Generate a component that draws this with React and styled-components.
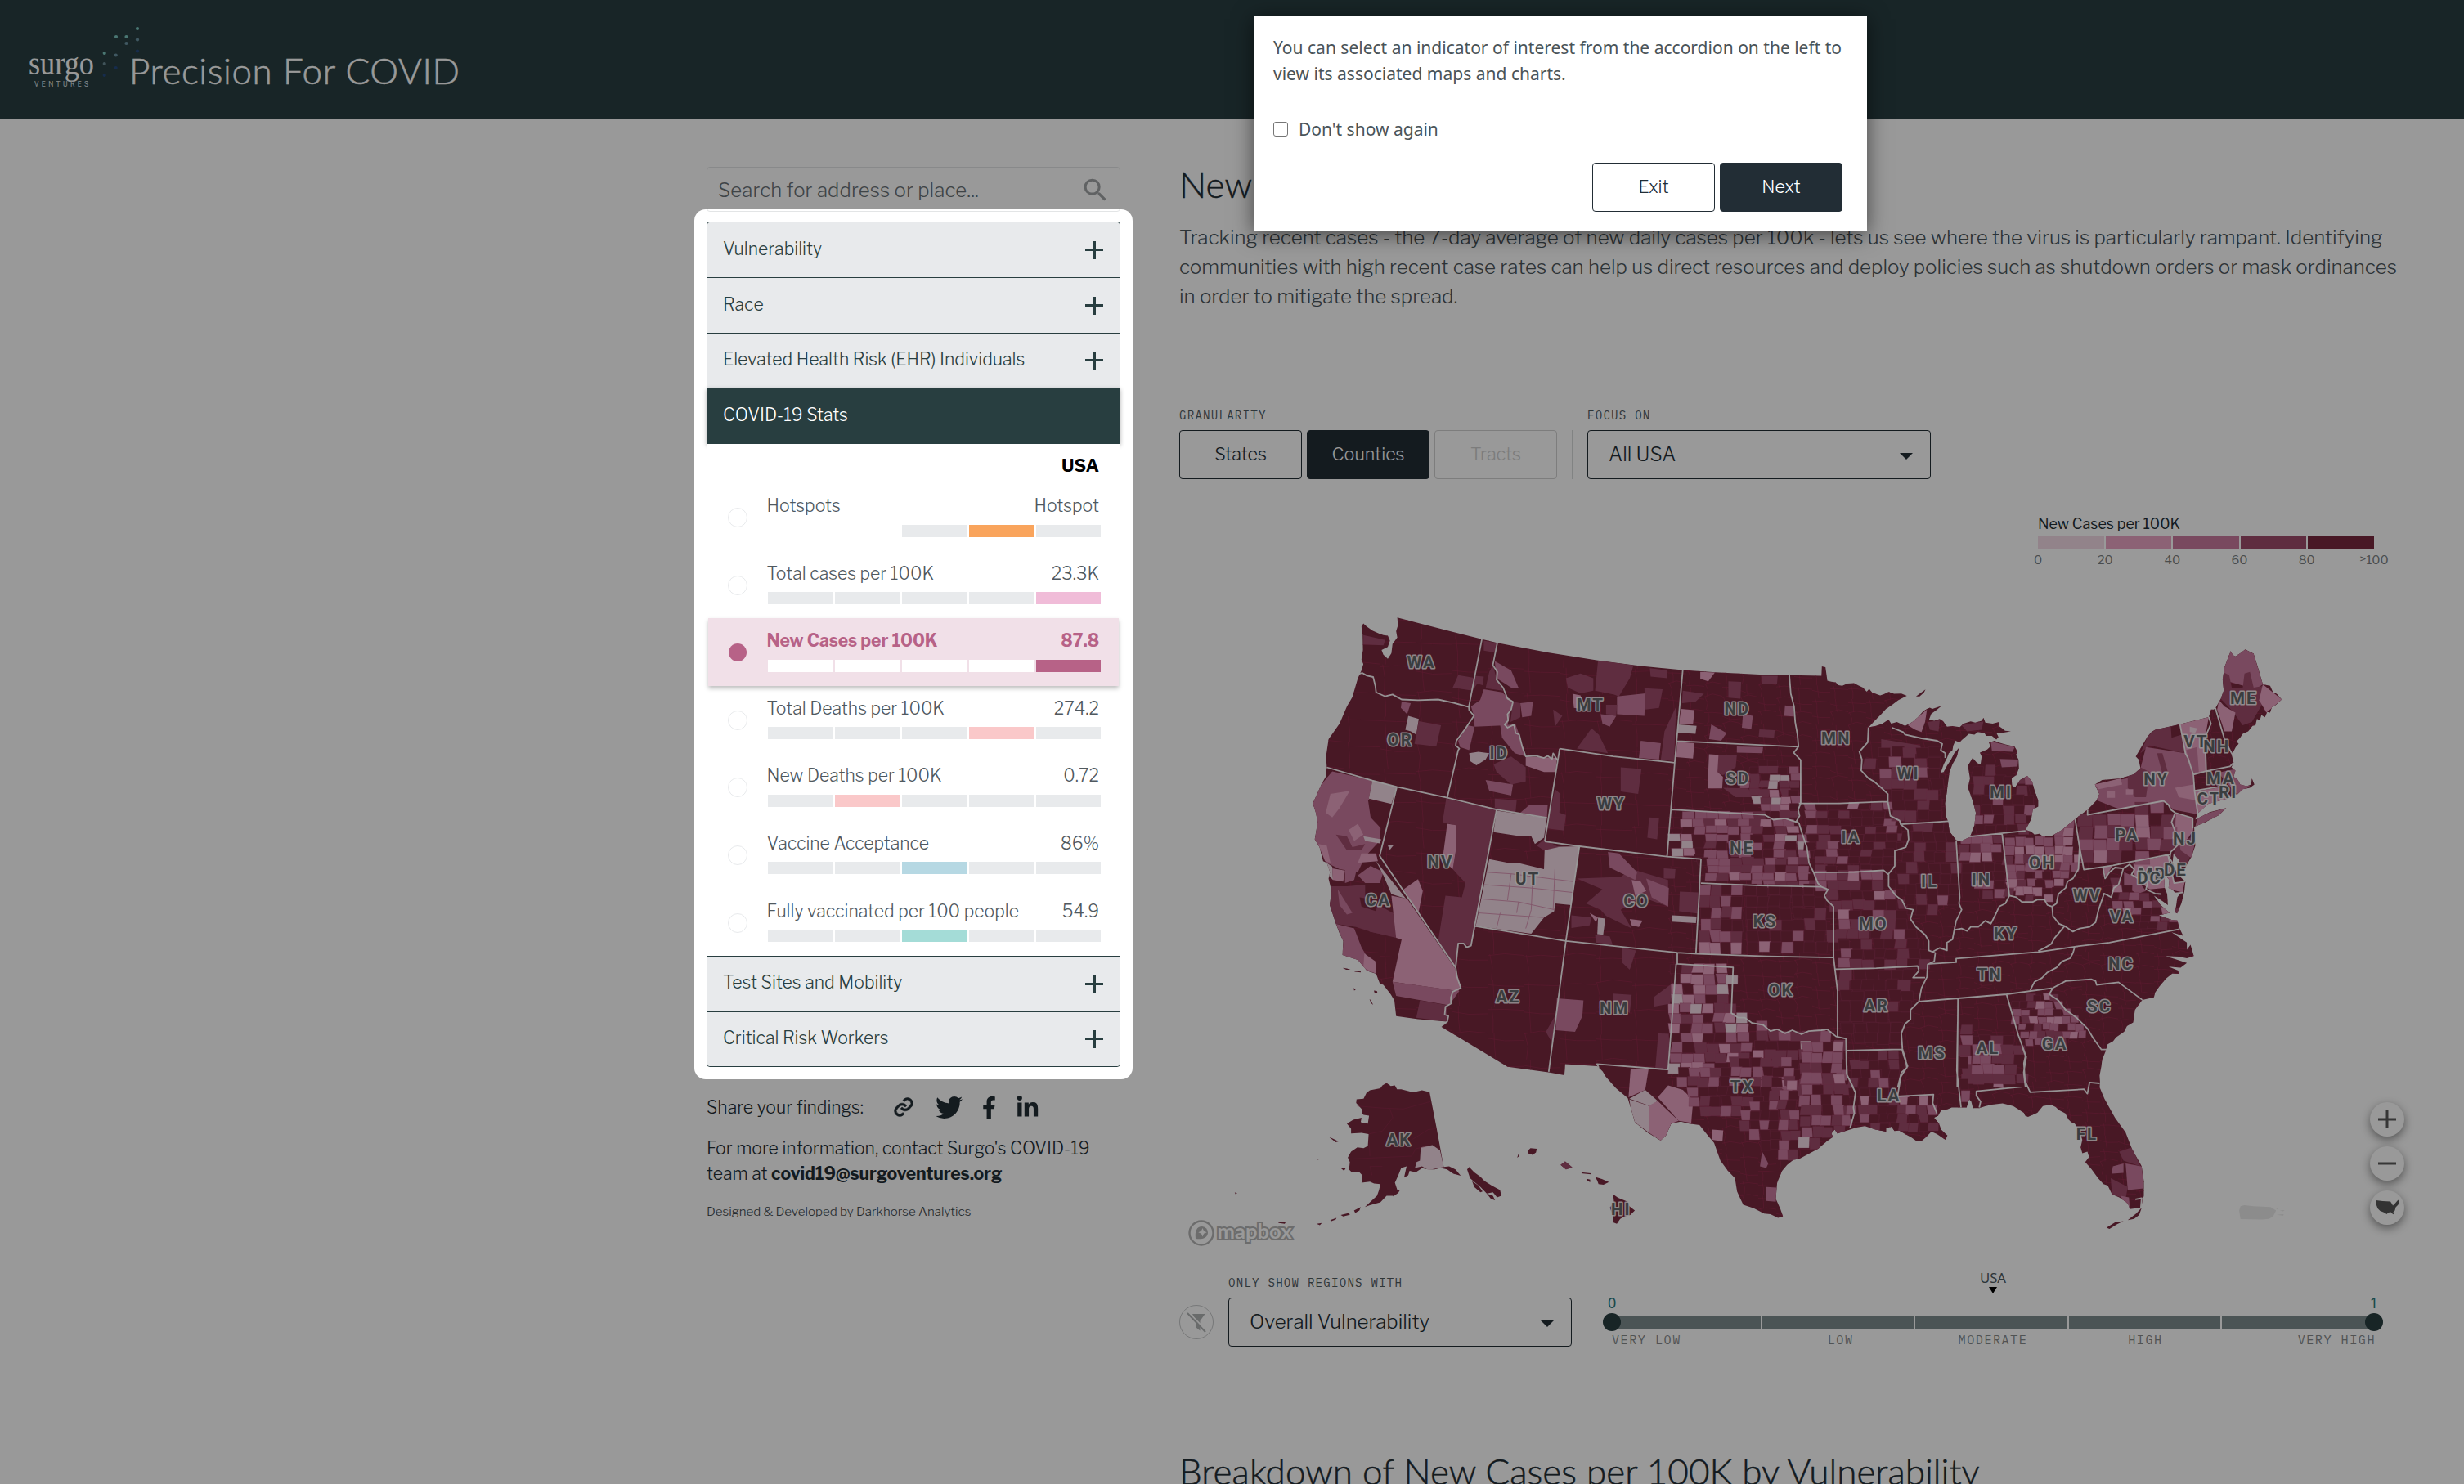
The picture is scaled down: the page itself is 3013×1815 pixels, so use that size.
import React from "react";
import styled, { createGlobalStyle, css } from "styled-components";
import { MdSearch } from "react-icons/md";
import { BiLink } from "react-icons/bi";
import { FaTwitter, FaFacebookF, FaLinkedinIn } from "react-icons/fa";

const sans = `"Libre Franklin", Inter, "Liberation Sans", sans-serif`;
const display = `Optima, Lato, sans-serif`;
const mono = `"IBM Plex Mono", "DejaVu Sans Mono", monospace`;
const ink = "#222d35";
const teal = "#283e40";

const Global = createGlobalStyle`
  * { box-sizing: border-box; }
  body { margin: 0; background: #fff; font-family: ${sans}; color: ${ink}; overflow: hidden; }
  button, input { font: inherit; }
`;

const Page = styled.div`
  position: relative;
  width: 3013px;
  height: 1815px;
  overflow: hidden;
`;

/* ---------- header ---------- */
const Header = styled.header`
  height: 145px;
  background: #283f41;
  display: flex;
  align-items: flex-start;
  padding: 25px 0 0 35px;
`;
const Brand = styled.div`
  width: 123px;
  height: 90px;
  svg { display: block; }
`;
const SiteTitle = styled.h1`
  margin: 33px 0 0;
  font: 300 44px/56px ${display};
  letter-spacing: 0.6px;
  -webkit-text-stroke: 0.5px #fff;
  color: #fff;
  white-space: nowrap;
`;

const brandDots = [
  [133, 10, "#7cc7c0"], [107, 20, "#7cc7c0"], [119.5, 20, "#7cc7c0"], [133, 23.5, "#6b93a3"],
  [119.5, 28, "#6b93a3"], [133, 37.5, "#264a80"], [92.7, 40, "#7cc7c0"], [106.7, 42.5, "#6b93a3"],
  [92.7, 53, "#6b8a94"], [106.7, 58, "#264a80"], [92.7, 67, "#264a80"],
];

/* ---------- columns ---------- */
const Columns = styled.div`
  display: flex;
  gap: 72px;
  padding-left: 864px;
`;
const Sidebar = styled.aside`
  width: 506px;
  padding-top: 59px;
`;
const Content = styled.main`
  width: 1520px;
  padding-top: 51px;
`;

const SearchBox = styled.div`
  height: 55px;
  border: 1px solid #e3e5e6;
  border-radius: 4px;
  padding: 2px 11px 0 13px;
  display: flex;
  align-items: center;
  justify-content: space-between;
  font-size: 24px;
  font-weight: 300;
  letter-spacing: 0.1px;
  color: #6a7277;
  svg { color: #a0a3a5; }
`;

const Stage = styled.section`
  position: relative;
  z-index: 5;
  margin: -3px -15px 0;
  padding: 15px;
  border-radius: 14px;
  box-shadow: 0 0 0 4000px rgba(0, 0, 0, 0.4);
`;
const Accordion = styled.div`
  border: 1px solid ${teal};
  border-radius: 4px;
  height: 1034px;
`;
const AccordionHeader = styled.div`
  height: ${(p) => (p.$open ? 69 : 67.4)}px;
  display: flex;
  align-items: center;
  justify-content: space-between;
  padding: 0 18px 3px 19px;
  font-size: 21.2px;
  font-weight: 300;
  color: ${teal};
  background: #e8eaec;
  border-top: ${(p) => (p.$line ? `1px solid ${teal}` : "none")};
  border-radius: ${(p) => (p.$edge === "top" ? "4px 4px 0 0" : p.$edge === "bottom" ? "0 0 4px 4px" : 0)};
  ${(p) =>
    p.$open &&
    css`
      color: #fff;
      background: ${teal};
      margin: 0 -1px;
      padding-left: 20px;
      box-shadow: 0 2px 5px rgba(0, 0, 0, 0.3);
    `}
`;
const Plus = styled.span`
  width: 22px;
  height: 22px;
  margin-right: 2px;
  margin-top: 3px;
  background:
    linear-gradient(${teal}, ${teal}) center / 22px 3px no-repeat,
    linear-gradient(${teal}, ${teal}) center / 3px 22px no-repeat;
`;
const Panel = styled.div`
  height: 626px;
  background: #fff;
  display: flex;
  flex-direction: column;
`;
const PanelHead = styled.div`
  height: 48px;
  padding: 12px 25px 0 0;
  text-align: right;
  font: 700 21.5px/28px ${sans};
  color: #000;
`;
const IndicatorRow = styled.div`
  height: 82.57px;
  margin: 0 1px;
  padding: 14px 22px 0 24px;
  display: grid;
  grid-template-columns: 49px 407px;
  color: ${(p) => (p.$active ? "#b76287" : "#50595f")};
  font-weight: ${(p) => (p.$active ? 700 : 300)};
  letter-spacing: ${(p) => (p.$active ? "-0.15px" : "0")};
  background: ${(p) => (p.$active ? "#f1e0e8" : "transparent")};
  box-shadow: ${(p) => (p.$active ? "0 3px 5px rgba(0,0,0,.25)" : "none")};
`;
const Radio = styled.span`
  width: ${(p) => (p.$active ? 22 : 24)}px;
  height: ${(p) => (p.$active ? 22 : 24)}px;
  margin: ${(p) => (p.$active ? "17px 0 0 1px" : "16px 0 0 0")};
  border-radius: 50%;
  border: ${(p) => (p.$active ? "none" : "1px solid #e8eaec")};
  background: ${(p) => (p.$active ? "#b76287" : "#fff")};
`;
const RowText = styled.div`
  display: flex;
  justify-content: space-between;
  margin-left: -1.5px;
  padding-right: 2px;
  font-size: 21.2px;
  line-height: 28px;
  white-space: nowrap;
`;
const Segments = styled.div`
  display: grid;
  grid-template-columns: repeat(5, 79px);
  gap: 3px;
  margin-top: 8.5px;
`;
const Segment = styled.span`
  height: 15px;
  background: ${(p) => p.$color};
`;

const ShareRow = styled.div`
  display: flex;
  align-items: center;
  height: 40px;
  margin-top: 14px;
  font-size: 21.2px;
  font-weight: 300;
  svg { display: block; color: ${ink}; }
`;
const ShareText = styled.span`
  width: 225px;
`;
const ShareIcons = styled.div`
  display: flex;
  align-items: center;
  gap: 19px;
  svg:first-child { margin-right: 4px; stroke: ${ink}; stroke-width: 0.5px; }
`;
const Contact = styled.p`
  margin: 15px 0 0;
  font-size: 21.2px;
  font-weight: 300;
  line-height: 31px;
  white-space: nowrap;
  b { font-weight: 700; letter-spacing: -0.1px; }
`;
const Credit = styled.p`
  margin: 21px 0 0;
  font-size: 15.15px;
  line-height: 20px;
  font-weight: 300;
  color: #40484d;
`;

/* ---------- content ---------- */
const Heading = styled.h2`
  margin: ${(p) => p.$top || 0}px 0 0;
  font: 300 44px/58px ${display};
  letter-spacing: 0.02px;
  -webkit-text-stroke: 0.5px ${ink};
  color: ${ink};
  white-space: nowrap;
`;
const Intro = styled.p`
  margin: 19px 0 0;
  height: 108px;
  font-size: 24.18px;
  line-height: 36px;
  font-weight: 300;
  color: #4b555b;
  white-space: nowrap;
`;
const Controls = styled.div`
  display: flex;
  margin-top: 117px;
`;
const Field = styled.div`
  display: flex;
  flex-direction: column;
`;
const Label = styled.span`
  height: 28px;
  font: 400 14.2px/19px ${mono};
  letter-spacing: 1.18px;
  color: #4f5a60;
  white-space: nowrap;
`;
const ButtonRow = styled.div`
  display: flex;
  gap: 6px;
`;
const Button = styled.button`
  width: 150px;
  height: 60px;
  padding: 0 0 3px;
  border-radius: 4px;
  font-size: 21.5px;
  font-weight: 300;
  font-family: ${sans};
  color: ${ink};
  background: #fff;
  border: 1.5px solid ${ink};
  ${(p) => p.$solid && css`background: ${ink}; color: #fff;`}
  ${(p) => p.$muted && css`border-color: #d0d0d0; color: #cfcfcf;`}
`;
const Divider = styled.span`
  width: 1px;
  height: 60px;
  margin: 28px 18px 0 18px;
  background: #d8dadb;
`;
const Select = styled.div`
  width: 420px;
  height: 60px;
  border: 1.5px solid ${ink};
  border-radius: 4px;
  padding: 0 21px 1px 25px;
  display: flex;
  align-items: center;
  justify-content: space-between;
  font-size: 24px;
  font-weight: 300;
`;
const Caret = styled.i`
  border: 8px solid transparent;
  border-top-color: ${ink};
  border-bottom: 0;
  margin-top: 4px;
`;

const Legend = styled.div`
  width: 411px;
  height: 78px;
  margin: 42px 0 0 1050px;
`;
const LegendTitle = styled.div`
  font-size: 17.9px;
  line-height: 26px;
  font-weight: 400;
`;
const LegendBar = styled.div`
  display: grid;
  grid-template-columns: repeat(5, 1fr);
  gap: 2px;
  margin-top: 2px;
`;
const LegendSwatch = styled.i`
  height: 16px;
  background: ${(p) => p.$color};
`;
const LegendTicks = styled.div`
  display: flex;
  justify-content: space-between;
  margin: 3px -30px 0;
  font-size: 14.8px;
  line-height: 20px;
  color: #7b7f82;
  span { width: 60px; text-align: center; }
`;

const MapFrame = styled.div`
  position: relative;
  height: 816px;
  svg.map { display: block; }
`;
const MapAttribution = styled.div`
  position: absolute;
  left: 9.5px;
  bottom: -3px;
  display: flex;
  align-items: center;
`;
const MapButtons = styled.div`
  position: absolute;
  left: 1456px;
  top: 642px;
  display: flex;
  flex-direction: column;
  gap: 12px;
`;
const RoundButton = styled.button`
  width: 42px;
  height: 42px;
  padding: 0;
  border: 0;
  border-radius: 50%;
  background: #fff;
  box-shadow: 0 4px 12px rgba(0, 0, 0, 0.45);
  display: grid;
  place-items: center;
`;

const FilterRow = styled.div`
  display: flex;
  align-items: flex-start;
  margin-top: 37px;
  height: 96px;
`;
const FilterToggle = styled.span`
  width: 42px;
  height: 42px;
  margin: 37px 18px 0 0;
  border-radius: 50%;
  border: 1px solid #c6c8c9;
  display: grid;
  place-items: center;
`;
const Slider = styled.div`
  width: 932px;
  margin: -6px 0 0 49px;
  font-family: ${mono};
`;
const SliderMarker = styled.div`
  display: flex;
  flex-direction: column;
  align-items: center;
  height: 30px;
  font: 400 16.8px/20px "Noto Sans", sans-serif;
  color: #4f5a60;
  i { margin-top: 1px; border: 5.5px solid transparent; border-top: 8px solid #000; border-bottom: 0; }
`;
const SliderEnds = styled.div`
  display: flex;
  justify-content: space-between;
  margin: 0 -5px;
  font: 400 18px/20px "Noto Sans", sans-serif;
  color: #2d7a7a;
`;
const SliderTrack = styled.div`
  display: grid;
  grid-template-columns: 22px 1fr 22px;
  align-items: center;
  margin: 3px -11px 0;
  height: 22px;
`;
const TrackBars = styled.div`
  grid-column: 1 / 4;
  grid-row: 1;
  margin: 0 12px 0 8px;
  display: grid;
  grid-template-columns: repeat(5, 1fr);
  gap: 2px;
  i { height: 15px; background: #7d8c8e; }
`;
const Knob = styled.span`
  grid-row: 1;
  grid-column: ${(p) => p.$col};
  z-index: 1;
  width: 22px;
  height: 22px;
  border-radius: 50%;
  background: ${teal};
`;
const SliderLabels = styled.div`
  display: grid;
  grid-template-columns: repeat(5, 1fr);
  font-size: 15.2px;
  line-height: 20px;
  letter-spacing: 1.48px;
  color: #858a8d;
  text-align: center;
  span:first-child { text-align: left; }
  span:last-child { text-align: right; margin-right: -2px; }
`;

/* ---------- popover ---------- */
const Popover = styled.div`
  position: absolute;
  z-index: 10;
  left: 1533px;
  top: 19px;
  width: 750px;
  height: 264px;
  padding: 23px 30px 0 24px;
  background: #fff;
  box-shadow: 0 4px 24px rgba(0, 0, 0, 0.55);
  font-family: "Noto Sans", sans-serif;
  color: #4a5459;
`;
const PopoverText = styled.p`
  margin: 0;
  font-size: 21.03px;
  line-height: 32px;
  white-space: nowrap;
`;
const CheckLine = styled.label`
  display: flex;
  align-items: center;
  gap: 13px;
  margin-top: 36px;
  height: 32px;
  font-size: 21.03px;
`;
const CheckBox = styled.span`
  width: 18px;
  height: 18px;
  border: 1.5px solid #767676;
  border-radius: 3px;
`;
const PopoverButtons = styled.div`
  display: flex;
  justify-content: flex-end;
  gap: 6px;
  margin-top: 25px;
`;

/* ---------- map geometry ---------- */
// Survey sheets: each has an origin and a scale, so neighbouring sheets join in one canvas.
const sheet = (ox, oy, sx, sy) => (str) =>
  str.trim().split(/\s+/).map((p) => {
    const [x, y] = p.split(",").map(Number);
    return [ox + x / sx, oy + y / sy];
  });
const W = sheet(1580, 730, 2.24, 2.6133);
const E = sheet(2200, 730, 2.24, 2.6133);
const S = sheet(1420, 1250, 1.96, 2.775);
const T = sheet(2200, 1250, 1.929, 2.775);
const line = (pts) => "M" + pts.map((p) => p[0].toFixed(1) + "," + p[1].toFixed(1)).join("L");
const area = (pts) => line(pts) + "Z";

const usa = [
  ...W("195,85 205,95 220,108 240,118 250,122 262,124 268,140 262,160 245,170 250,185 262,198 272,180 275,150 288,130 285,110 290,90 288,66 400,100 520,135 562,147 700,178 838,203 950,220 1070,234 1160,241 1280,248 1362,250 1450,252 1451,222 1461,225 1466,268"),
  ...E("77,268 88,271 100,273 108,282 118,284 132,277 150,276 162,283 175,290 185,303 192,294 200,306 222,315 232,311 245,304 260,310 280,309 295,316 272,330 255,345 238,358 225,375 208,395 190,417 208,413 228,405 245,392 252,405 268,400 290,412 310,400 325,385 340,365 350,358 358,354 365,358 390,348 378,360 362,374 356,392 370,396 385,390 395,398 405,415 420,413 440,416 450,405 470,398 482,402 500,396 505,386 510,402 530,405 548,400 546,412 556,420 564,428 580,430 560,434 540,434 546,448 540,456 528,444 512,444 508,436 490,432 480,440 465,438 455,448 445,458 440,465 428,460 422,476 420,490 410,500 405,515 396,535 388,562 396,560 405,540 415,522 425,500 438,482 432,510 420,535 412,560 405,620 400,660 402,700 408,717 412,750 430,778 445,780 468,767 480,730 484,690 475,650 462,610 468,580 462,540 475,515 488,532 497,535 500,510 495,498 515,488 524,478 520,466 535,460 548,466 565,472 590,478 598,495 594,505 601,520 602,548 595,570 582,580 583,605 592,608 605,585 625,572 638,590 645,620 655,650 655,670 640,680 636,710 620,745 635,750 645,760 658,757 668,766 690,765 705,755 720,745 756,710 790,680 815,650 822,630 810,600 830,585 880,580 915,568 935,548 930,520 922,510 935,485 955,445 965,432 975,425 1043,407 1122,384 1128,360 1136,360 1141,354 1155,325 1163,300 1160,265 1165,225 1182,173 1188,186 1195,190 1208,180 1222,168 1245,182 1258,230 1270,280 1290,284 1298,305 1308,310 1322,328 1305,346 1295,352 1290,370 1282,368 1276,385 1266,378 1262,395 1254,390 1250,410 1242,412 1230,430 1215,438 1208,450 1198,462 1204,470 1196,480 1185,505 1190,530 1184,545 1195,555 1190,575 1202,585 1208,600 1226,605 1238,600 1240,580 1247,600 1235,610 1215,615 1200,632 1190,630 1182,640 1178,630 1174,645 1150,652 1120,662 1092,692 1085,712 1125,688 1170,675 1150,698 1110,722 1082,735 1085,795 1075,830 1060,860 1052,880 1040,840 1025,820 1023,850 1035,885 1058,910 1055,942 1047,980 1035,1012 1030,1008 1036,960 1045,946 1030,946 1022,935 1012,930 1014,905 1002,888 1000,925 1008,950 1010,985 990,968 972,955 990,985 1015,1010 985,1018 1020,1032 1036,1034 1042,1060 1052,1083 1020,1072 1040,1088 1062,1105 1062,1128 1072,1112 1081,1148 1062,1155 1040,1150 1003,1148 1040,1162 1062,1170 1045,1185 1012,1182 1038,1194 1040,1205 1022,1204 1005,1220 985,1248 975,1265 972,1280 940,1288 920,1320 915,1360 898,1372 890,1390 868,1408 860,1420 845,1430 840,1450 830,1480 828,1500 823,1530 824,1550"),
  ...T("709,222 720,260 745,325 770,375 785,430 808,490 813,540 813,590 806,630 780,635 776,618 770,610 755,595 738,585 728,555 718,550 705,530 690,500 675,475 684,458 680,440 668,445 664,425 668,400 660,365 650,345 642,340 635,330 628,310 612,298 605,288 593,280 575,285 562,308 540,322 533,318 530,308 505,285 480,276 455,280 440,285 425,292 410,292 406,270 401,262 395,290 360,290 350,296 335,300 328,318 318,325 330,345 335,365 350,385 345,400 325,380 312,372 300,390 290,402 278,405 265,392 250,380 235,368 225,370 218,355 205,360 205,372 180,365 155,353 135,358 120,365 105,372 90,378 84,365 76,378 80,390 65,405 45,430 0,465"),
  ...S("1515,468 1500,485 1488,505 1476,545 1473,600 1484,635 1490,660 1478,665 1460,652 1445,650 1420,632 1395,620 1388,600 1380,575 1375,530 1358,505 1340,470 1325,410 1310,385 1290,350 1265,345 1245,338 1222,345 1210,385 1197,402 1165,375 1135,340 1125,290 1118,258 1090,225 1065,185 1058,168 1045,150 968,143 966,180 928,171 830,152 670,15"),
  ...W("407,1373 425,1358 345,1350 285,1340 280,1290 270,1270 250,1240 240,1235 230,1205 205,1195 180,1160 138,1145 140,1100 130,1075 120,1045 103,985 108,940 100,900 104,880 95,850 85,845 75,800 62,775 70,720 65,690 57,660 80,600 92,575 95,545 93,510 100,455 130,405 150,350 165,320 180,260 190,235 195,215 190,200 194,170 193,120 190,95"),
];

const alaska = [
  S("540,207 550,217 560,215 565,228 575,228 600,237 612,236 625,232 643,238 660,360 677,492 690,490 705,500 718,522 700,515 685,500 670,495 655,500 640,500 625,496 610,510 595,505 592,520 582,528 588,490 575,495 568,520 560,545 566,572 556,590 540,590 525,612 500,622 488,628 500,612 517,590 522,570 525,550 510,548 500,542 480,545 482,520 475,510 455,508 450,500 452,475 447,460 455,440 470,425 485,428 495,420 497,380 480,376 455,378 455,362 445,345 460,332 480,325 478,340 495,345 498,318 485,315 482,310 480,295 467,275 468,262 485,260 492,240 500,232 525,225 530,215"),
  S("733,500 738,492 750,510 765,525 775,540 792,555 812,570 815,590 805,595 795,578 780,582 765,560 748,540 740,530"),
  S("745,540 760,555 770,575 765,578 750,560"), S("780,582 795,590 800,605 790,600"),
  S("462,640 478,628 475,640 465,648"), S("430,655 450,648 452,654 436,660"), S("405,672 420,665 418,670 408,676"),
  S("372,685 385,682 380,690"), S("278,678 298,680 296,685 282,682"), S("402,390 412,396 425,405 418,408"),
  S("430,495 442,496 438,505"), S("372,462 378,466 374,468"), S("176,578 182,582 178,584"),
  S("550,575 572,570 568,580 556,592"),
];
const hawaii = [
  S("878,437 885,428 900,430 898,443 890,451 880,446"), S("957,485 968,473 985,493 970,500"),
  S("1006,510 1030,513 1030,517 1010,514"), S("1040,526 1056,533 1073,543 1060,552 1048,550 1045,538"),
  S("1020,532 1028,535 1028,543 1022,540"), S("1083,585 1095,597 1118,610 1122,625 1135,640 1124,655 1110,660 1100,668 1092,685 1083,680 1082,655 1075,630 1085,612"),
  S("856,448 858,455 853,461"),
];
const coastBits = [
  W("138,1186 150,1188 160,1192 148,1192"), W("168,1195 188,1194 188,1200 172,1198"), W("168,1250 174,1256 170,1258"),
  W("224,1258 232,1260 234,1266 226,1266"), W("212,1285 216,1290 222,1304 216,1298"),
  E("320,318 335,305 346,296 342,306 330,318"), T("725,698 745,680 765,676 750,686 732,702"), T("775,672 795,650 808,630 802,655 790,668"),
];

const tone = { 1: "#f4dae6", 2: "#e9a4c4", 3: "#ca7b9e", 4: "#9f4c6c", 5: "#78283f" };

const patches = [
  [3, W("110,558 220,587 210,645 245,700 240,780 200,830 180,880 130,870 95,850 62,775 70,720 57,660 80,600")],
  [5, W("208,650 272,662 250,748 215,705")],
  [4, W("120,760 150,765 165,800 200,790 190,810 150,810")],
  [2, W("105,630 158,620 130,675 110,705 92,690")], [2, W("72,790 95,795 105,850 90,845")],
  [2, W("155,745 180,725 195,760 170,780")], [1, W("195,765 244,775 240,788 200,780")],
  [2, W("190,820 230,820 235,845 180,850")], [1, W("95,850 110,862 112,905 100,890")],
  [2, W("110,868 145,875 140,910 112,905")], [3, W("145,860 178,865 170,905 145,915")],
  [4, W("108,925 150,925 200,920 200,960 275,1010 285,1090 215,1070 175,1055 120,1045 103,985")],
  [3, W("180,890 215,860 250,880 240,915 200,915")], [3, W("125,935 165,1010 150,1015 130,985")],
  [4, W("218,1010 280,1010 287,1088 212,1070")], [5, W("185,960 235,970 230,1005 190,990")],
  [3, W("120,1045 170,1060 190,1120 230,1200 205,1200 138,1145 140,1100")],
  [2, W("198,1140 228,1165 230,1205 195,1185")],
  [1, W("230,845 312,965 272,950 250,890")],
  [2, W("272,955 315,965 445,1185 462,1250 455,1260 275,1230 300,1095 285,1090")],
  [3, W("275,1230 458,1260 430,1305 285,1275")], [4, W("350,1290 425,1305 425,1358 340,1345")],
  [4, W("422,645 558,680 545,760 505,1045 490,1115 455,1108 448,1185 400,1100 420,955 465,960 475,915 440,870 450,800 445,730 412,720")],
  [2, W("425,725 448,730 450,800 440,870 412,840")], [2, W("345,902 358,940 346,1010 305,935")],
  [1, W("262,795 279,792 268,808")], [1, W("220,587 287,607 272,662 210,645")],
  [1, W("540,838 600,852 625,852 690,870 692,800 787,797 765,985 720,980 718,1005 690,1025 655,1077 503,1052")],
  [1, W("560,683 698,706 690,770 665,790 655,765 625,765 552,752")],
  [4, W("690,775 730,800 690,810 670,795")],
  [1, W("318,380 347,390 340,440 325,430 310,425")], [4, W("347,397 408,410 395,478 335,470")],
  [3, W("300,335 325,340 315,375 298,355")], [4, W("195,122 255,138 250,155 195,152")],
  [4, W("455,250 515,262 495,300 440,290")], [4, W("525,140 560,148 555,178 525,172")],
  [4, W("498,252 525,255 522,282 500,275")], [4, W("550,218 560,262 578,300 530,292 540,240")],
  [3, W("525,295 575,305 605,335 590,410 500,415 498,380 490,350 515,330")],
  [3, W("455,460 480,410 500,415 485,490 460,480")], [3, W("570,410 612,408 622,440 640,510 610,500 575,450")],
  [1, W("485,500 510,495 540,500 530,520 505,538 488,525")],
  [2, W("640,510 725,515 722,560 690,560 640,540")], [4, W("552,535 600,510 640,545 640,590 600,600 560,560")],
  [3, W("530,585 605,600 600,635 540,620")], [4, W("555,645 615,650 612,690 555,675")],
  [3, W("650,665 700,665 698,706 625,690")],
  [4, W("838,203 935,218 925,260 895,318 882,312 830,300")], [4, W("750,260 790,245 825,260 825,300 790,308 755,290")],
  [3, W("555,205 600,235 620,290 600,290 560,260")], [3, W("625,340 660,335 655,380 630,385")],
  [4, W("605,335 625,340 625,385 598,400")], [4, W("715,360 740,380 720,415")],
  [4, W("820,420 840,440 865,500 780,485")], [4, W("980,228 1028,235 1028,260 982,255")],
  [4, W("965,292 1015,295 1005,355 968,360")], [3, W("890,318 968,308 965,380 890,375")],
  [4, W("860,345 890,345 888,378 860,375")], [3, W("845,375 888,380 870,415 850,405")],
  [2, W("768,310 790,315 800,360 772,355")], [3, W("955,460 1010,468 1005,520 950,515")],
  [4, W("1052,350 1046,525 1010,520 1020,430")],
  [4, W("900,545 957,550 948,630 900,622")], [4, W("720,615 735,630 732,690 750,697 745,747 698,740")],
  [4, W("978,705 1005,707 1000,775 973,770")],
  [4, W("780,900 900,895 930,870 1030,905 1030,990 960,960 900,1000 930,1060 860,1020 845,1000 805,980 850,935")],
  [3, W("865,815 895,820 945,880 940,905 870,865")], [3, W("970,900 1032,930 1030,990 985,960")],
  [2, W("930,905 955,910 970,940 940,955")], [4, W("765,1018 820,1025 815,1050 765,1058")],
  [1, W("838,1025 858,1028 852,1080 836,1078")], [2, W("815,1010 838,1025 832,1040")],
  [2, W("925,1030 960,1035 950,1055 930,1050")], [1, W("1040,1018 1108,1022 1106,1043 1040,1038")],
  [4, W("1062,942 1112,945 1110,1012 1060,1005")], [4, W("830,1080 870,1085 878,1112 832,1105")],
  [4, W("1018,868 1050,870 1048,900 1018,900")],
  [4, W("905,1120 942,1130 925,1192 905,1170")], [4, W("1045,1232 1035,1300 990,1310 990,1280")],
  [4, W("1003,1395 1037,1397 1030,1511 995,1505")], [4, W("880,1268 930,1272 925,1330 880,1300")],
  [3, W("725,1283 798,1290 795,1340 775,1390 722,1385")], [4, W("720,1340 712,1425 695,1390")],
  [4, W("1070,300 1128,310 1105,335 1068,340")], [2, W("1118,240 1158,242 1140,270 1118,262")],
  [2, W("1065,358 1102,362 1098,408 1060,405")], [1, W("1058,408 1108,412 1105,438 1056,434")],
  [3, W("1148,408 1190,435 1175,460 1142,455")], [4, W("1195,270 1230,272 1228,325 1195,322")],
  [3, W("1235,375 1262,380 1258,422 1232,418")], [3, W("1350,347 1373,350 1375,382 1348,380")],
  [4, W("1285,252 1330,252 1328,280 1286,278")], [4, W("1280,423 1322,426 1320,450 1278,447")],
  [2, W("1056,463 1102,468 1098,517 1052,512")], [4, W("1165,505 1218,506 1215,545 1180,570 1160,560")],
  [2, W("1142,503 1168,505 1165,560 1180,575 1178,612 1138,612")], [4, W("1180,610 1250,612 1260,640 1215,640")],
  [3, W("1218,478 1290,480 1288,500 1218,498")],
  [3, E("1182,173 1195,190 1222,168 1245,182 1270,280 1250,295 1235,290 1160,265 1165,225")],
  [4, E("1160,240 1178,250 1185,290 1215,292 1220,245 1235,240 1245,290 1270,285 1270,340 1240,400 1215,410 1190,370 1155,325")],
  [2, E("1270,280 1322,328 1280,370 1260,330")], [2, E("1150,330 1165,350 1195,370 1185,430 1165,430 1145,360")],
  [4, E("975,425 1043,407 1058,500 960,475 935,500 955,445")], [5, E("1018,415 1043,407 1048,440 1020,450")],
  [3, E("950,480 1058,500 1080,568 1092,695 1025,680 998,652 880,680 815,650 822,630 810,600 920,575 935,548")],
  [4, E("900,570 935,545 960,560 950,640 920,640 900,610")], [4, E("980,500 995,500 1010,560 995,565")],
  [2, E("810,600 880,580 885,600 820,615")], [2, E("1030,610 1080,600 1085,650 1040,640")],
  [2, E("843,620 865,620 865,642 843,642")], [2, E("895,615 915,615 915,632 895,632")],
  [2, E("1043,407 1122,384 1112,450 1115,556 1085,565 1058,500")], [3, E("1060,490 1090,480 1095,560 1080,562")],
  [1, E("1070,415 1090,420 1085,435 1070,432")],
  [3, E("1148,562 1195,550 1212,600 1235,605 1200,632 1175,600")], [2, E("1083,622 1165,607 1172,645 1092,692")],
  [3, E("1092,700 1170,675 1150,698 1085,735")], [2, E("1030,692 1078,707 1080,745 1055,790 1037,790 1020,720")],
  [4, E("1037,790 1080,765 1082,800 1060,860 1022,830")], [3, E("1040,780 1083,790 1075,835 1045,810")],
  [2, E("915,850 1010,825 1027,915 1056,912 1050,945 1000,930 960,935 920,900")],
  [2, E("832,864 858,860 840,895")], [3, E("890,880 920,895 950,940 925,950 890,920")],
  [2, E("298,410 325,385 350,360 345,400 335,432 318,425")], [4, E("352,400 385,395 382,430 358,425")],
  [4, E("445,410 505,398 500,425 460,430")], [3, E("525,462 590,480 585,495 528,492")],
  [3, E("550,518 600,520 598,542 555,545")], [4, E("225,455 332,475 335,500 250,510 225,500")],
  [2, T("460,188 480,190 482,225 458,220")],
  [3, T("770,480 808,490 813,565 775,570")], [4, T("755,440 785,425 805,490 765,470")],
  [4, T("735,530 775,560 770,600 738,585")], [3, T("758,590 778,595 780,635 770,625")],
  [3, T("740,490 765,480 765,512 737,515")],
  [2, S("1125,158 1168,160 1160,230 1120,255")], [1, S("1122,260 1160,230 1190,268 1172,285")],
  [1, S("1122,262 1170,285 1168,375 1135,340 1125,290")],
  [2, S("1170,283 1190,268 1240,335 1222,345 1210,385 1197,402 1168,375")],
  [2, S("1190,255 1215,215 1250,230 1275,265 1270,342 1240,335")],
  [2, S("1320,365 1347,368 1345,405 1320,400")], [3, S("1450,560 1475,562 1473,610 1450,607")],
  [3, S("1440,440 1455,480 1450,495 1435,490")],
];

// Counties laid out as rough grids: [boundary, cell width, cell height, share of each tone 1..4]
const fields = [
  [W("1038,755 1120,760 1120,838 1030,828"), 14, 9, [0.25, 0.3, 0.2, 0]],
  [W("1062,684 1295,697 1315,712 1388,720 1410,800 1428,880 1450,927 1120,915 1120,760 1062,755"), 14, 9.5, [0.05, 0.13, 0.42, 0.24]],
  [W("1290,520 1393,550 1388,715 1310,700 1220,600"), 12, 9, [0.05, 0.13, 0.26, 0.34]],
  [W("1112,920 1220,920 1240,1145 1112,1140"), 13, 14, [0, 0.18, 0.26, 0.22]],
  [W("1240,920 1475,930 1483,1150 1240,1145"), 14, 14, [0, 0.01, 0.04, 0.08]],
  [W("1052,1175 1208,1186 1205,1330 1260,1350 1260,1500 1030,1511"), 14, 12, [0.1, 0.24, 0.25, 0.24]],
  [W("1260,1355 1350,1392 1450,1385 1517,1412 1520,1568 1260,1568"), 14, 12, [0.01, 0.07, 0.2, 0.38]],
  [S("1230,150 1520,120 1530,270 1410,290 1370,340 1270,290 1240,220"), 13, 12, [0, 0.1, 0.26, 0.3]],
  [S("1400,280 1529,200 1529,455 1490,470 1380,350"), 12, 12, [0, 0.04, 0.24, 0.26]],
  [T("0,60 60,30 111,98 113,180 133,240 120,360 60,405 0,460"), 13, 13, [0.01, 0.08, 0.42, 0.3]],
  [E("10,662 240,658 275,720 297,795 262,812 245,880 38,880"), 14, 9.5, [0, 0.03, 0.08, 0.2]],
  [E("40,885 230,875 285,970 310,1045 350,1130 345,1175 98,1188 92,985"), 14, 12, [0, 0.03, 0.18, 0.38]],
  [E("278,730 410,720 430,778 430,850 300,850"), 13, 12, [0, 0.04, 0.14, 0.2]],
  [E("262,850 435,850 440,975 320,1040"), 13, 13, [0, 0.01, 0.05, 0.12]],
  [E("433,775 553,760 558,850 440,860"), 13, 11, [0, 0.05, 0.22, 0.3]],
  [E("440,860 558,850 570,930 520,980"), 13, 11, [0, 0, 0.03, 0.12]],
  [E("560,760 690,765 756,710 768,850 640,870 576,955"), 12, 11, [0.02, 0.36, 0.54, 0.07]],
  [E("576,955 565,870 768,850 730,910 693,985 640,975"), 11, 10, [0, 0.14, 0.4, 0.34]],
  [E("760,720 998,655 1020,720 1037,790 1015,823 780,870"), 17, 15, [0, 0.08, 0.42, 0.42]],
  [E("180,500 380,480 405,620 400,715 278,722 243,640"), 15, 13, [0, 0.02, 0.14, 0.28]],
  [E("470,540 640,580 655,670 620,745 480,750"), 13, 12, [0, 0.02, 0.14, 0.26]],
  [E("575,1290 700,1270 790,1390 760,1420 620,1440"), 10, 9, [0, 0.05, 0.38, 0.4]],
  [E("440,1370 490,1380 510,1568 440,1568"), 14, 12, [0, 0, 0.5, 0.34]],
  [E("490,1400 600,1400 615,1568 510,1568"), 14, 12, [0, 0.02, 0.22, 0.34]],
  [E("105,1200 320,1190 285,1440 135,1445"), 15, 13, [0, 0, 0.05, 0.12]],
  [T("115,120 240,100 235,250 315,250 340,390 260,385 130,350"), 12, 11, [0, 0.02, 0.14, 0.26]],
  [E("850,900 1040,1000 1040,1060 960,1070 850,960"), 12, 9, [0, 0.08, 0.22, 0.34]],
  [T("375,0 390,130 400,280 380,280"), 11, 14, [0, 0, 0.4, 0.3]],
];

function inside([x, y], poly) {
  let hit = false;
  for (let i = 0, j = poly.length - 1; i < poly.length; j = i++) {
    const [xi, yi] = poly[i];
    const [xj, yj] = poly[j];
    if (yi > y !== yj > y && x < ((xj - xi) * (y - yi)) / (yj - yi) + xi) hit = !hit;
  }
  return hit;
}
const noise = (a, b) => {
  const v = Math.sin(a * 127.1 + b * 311.7) * 43758.5453;
  return v - Math.floor(v);
};

const cells = [];
fields.forEach(([poly, cw, ch, share], f) => {
  const xs = poly.map((p) => p[0]);
  const ys = poly.map((p) => p[1]);
  for (let r = 0, y = Math.min(...ys); y < Math.max(...ys); y += ch, r++) {
    for (let c = 0, x = Math.min(...xs) + noise(r, f) * 5; x < Math.max(...xs); x += cw, c++) {
      if (!inside([x + cw / 2, y + ch / 2], poly)) continue;
      const n = noise(c + 13 * f, r + 7 * f);
      let acc = 0;
      let level = 5;
      share.some((s, i) => {
        acc += s;
        if (n < acc) level = i + 1;
        return n < acc;
      });
      const j = (k) => (noise(c + k, r + f) - 0.5) * 2.4;
      cells.push([level, `M${x + j(1)},${y + j(2)}h${cw + j(3)}l${j(4)},${ch + j(5)}h${-cw - j(6)}Z`]);
    }
  }
});

// County lines over the uniformly dark states.
const mesh = [];
for (let r = 0; r < 46; r++) {
  for (let c = 0; c < 54; c++) {
    const x = 1600 + c * 22;
    const y = 755 + r * 16 + (c - 20) * 0.4;
    const sparse = x < 2040;
    if (sparse && (c % 2 || r % 2)) continue;
    const w = sparse ? 44 : 22;
    const h = sparse ? 32 : 16;
    const a = noise(c, r) * 8;
    mesh.push(`M${x},${y + a}l${w * 0.45},${a - 4}l${w * 0.55},${3 - a / 2}M${x + a},${y}l${4 - a / 2},${h * 0.5}l${a / 2 - 2},${h * 0.5}`);
  }
}

const borders = [
  W("180,248 192,243 205,252 222,256 228,285 230,305 255,318 275,312 300,328 345,330 400,328 440,338 484,352"),
  W("520,135 484,352 485,362 498,380 475,420 450,460 448,475 458,485 455,490 425,642"),
  W("562,147 550,218 562,240 560,265 578,290 590,325 605,335 600,360 590,375 592,395 582,408 590,418 608,408 612,435 622,440 630,478 640,510 668,508 690,515 700,508 712,518 715,500 728,525"),
  W("95,545 220,587 287,607 425,642 560,680 698,706"), W("733,485 692,782"), W("733,485 880,510 1048,530"),
  W("1070,234 1048,530 1027,830"), W("692,782 787,797 1027,830 1120,838"),
  W("560,680 500,1052 490,1115 478,1120 470,1108 455,1108 448,1185"),
  W("287,607 240,828 448,1185 452,1215 462,1250 440,1262 435,1280 435,1300 420,1310 418,1335 428,1340 425,1358 407,1373"),
  W("787,797 750,1100 703,1518"), W("500,1052 750,1100 1055,1137 1110,1141 1300,1149 1483,1153"),
  W("1120,838 1106,1141"), W("1120,915 1280,923 1450,927"), W("1055,461 1387,479"),
  W("1362,250 1366,310 1375,350 1378,400 1384,440 1387,479 1374,498 1393,522 1393,660 1386,680 1390,700 1380,720"),
  W("1038,680 1295,697 1318,712 1350,708 1388,722"), W("1388,660 1500,660 1632,654"),
  W("1388,722 1398,760 1410,800 1416,850 1428,880 1440,915 1450,927 1468,935 1458,955 1465,970 1483,990 1483,1153 1494,1260 1494,1405"),
  W("1430,881 1540,880 1620,874 1634,888"),
  W("1055,1137 1055,1173 1208,1184 1203,1330 1222,1345 1240,1345 1260,1362 1290,1368 1310,1388 1328,1382 1350,1395 1370,1385 1395,1398 1415,1388 1450,1385 1465,1382 1490,1405 1517,1412 1519,1525 1537,1568"),
  W("1052,1173 1030,1511 835,1493 840,1505"), W("1487,1190 1600,1187 1714,1180"),
  E("325,1180 328,1195 312,1217 345,1217"), E("130,1450 283,1446"),
  T("111,98 113,180 120,200 133,240 128,290 130,310 120,360"),
  E("190,417 188,465 165,495 172,520 170,555 190,580 205,590 225,610 243,630 243,655 250,700 275,715 278,727 298,745 300,775 292,800 262,812 262,860 245,885 245,925 265,955 282,970 292,995 312,1000 305,1030 320,1055 345,1080 355,1100 355,1130 373,1138 370,1165 352,1175 350,1215 335,1250 328,1293 305,1320 305,1350 290,1365 280,1395 283,1445 292,1480 295,1505 280,1520 270,1568"),
  T("243,95 248,120 256,150 240,185 232,252 317,246 315,275 325,310"),
  E("278,727 410,717"), E("255,418 285,432 290,440 335,452 378,460 392,470 388,490 400,500 400,515"),
  E("430,778 440,960 438,980 445,1000 430,1035 425,1065"), E("450,768 620,748"), E("556,757 576,955"),
  E("756,710 768,800 780,872 860,858 885,852 950,838 1015,823"),
  E("365,1135 385,1122 405,1130 405,1105 420,1095 425,1065 445,1060 460,1068 470,1055 490,1055 510,1035 525,1045 540,1010 548,990 565,980 576,955 595,960 610,975 640,975 652,968 672,968 680,985 693,990 705,980 710,950 730,930 735,910 750,900 765,870 768,800"),
  E("693,990 695,1020 712,1045 727,1052 750,1070 768,1060 795,1055 812,1040 820,1000 832,960 835,948 855,960 862,930 875,920 885,880 888,868"),
  E("727,1052 700,1090 690,1110 675,1120 655,1132"),
  E("357,1173 430,1168 430,1156 655,1135 755,1118 850,1105 1042,1062"),
  E("755,1118 750,1138 742,1155 720,1165 705,1185 680,1200 665,1218 645,1230 633,1257"),
  E("328,1293 435,1283 568,1270 695,1250"), E("695,1250 730,1228 800,1222 812,1228 815,1240 875,1232 940,1288"),
  E("695,1250 685,1270 710,1290 730,1320 760,1345 790,1380 805,1410 828,1447 843,1447"),
  E("568,1270 600,1400 622,1470 615,1520 620,1568"), E("435,1283 433,1568"),
  T("374,0 372,165 382,290"), T("425,290 428,270 418,250 418,235 538,218"),
  T("528,90 534,115 530,140 533,200 545,238 672,228 680,243 685,205 709,208"),
  E("790,680 790,697 998,652 1012,665 1018,680 1030,690 1078,707 1078,740"),
  E("1030,690 1020,720 1030,750 1025,770 1040,790 1018,815 1015,835 1022,850"),
  E("1043,407 1050,450 1058,500 1065,515 1080,568 1083,620 1092,695"),
  E("1122,384 1128,405 1112,450 1115,556"), E("1080,568 1115,557 1180,542 1190,530"),
  E("1140,355 1165,455 1180,490 1190,510"), E("1083,620 1145,608 1168,603 1172,640"),
  E("888,868 865,865 850,880 838,900 832,864"), E("888,868 905,855 918,872 910,888 930,900 955,912 950,935 975,948 990,950"),
  E("1010,823 1027,915 1058,910"), E("1022,948 1052,945"), T("793,602 808,598 806,632"),
];

const labels = [
  [W, "WA 352,209 OR 294,455 ID 565,499 MT 815,344 ND 1217,357 MN 1488,450 SD 1219,580 WY 872,660 NE 1230,802 IA 1529,766 NV 404,845 UT 643,901 CO 941,970 CA 234,968 KS 1293,1035 AZ 590,1276 NM 881,1312 OK 1337,1256"],
  [E, "WI 297,564 MI 551,624 IL 355,908 IN 497,904 OH 664,848 MO 201,1043 KY 564,1076 WV 787,953 VA 882,1020 PA 896,760 NJ 1055,772 NY 976,581 VT 1085,462 NH 1142,476 ME 1216,322 MA 1153,580 CT 1121,644 RI 1173,622 MD 966,885 DC 958,897 DE 1029,872 TN 520,1207 NC 880,1171 AR 210,1306 SC 820,1308 MS 362,1458 AL 515,1441 GA 698,1427"],
  [S, "TX 1391,217 AK 568,399 HI 1100,633"],
  [T, "LA 210,249 FL 677,378"],
].flatMap(([frame, str]) => {
  const parts = str.split(" ");
  const out = [];
  for (let i = 0; i < parts.length; i += 2) out.push([parts[i], frame(parts[i + 1])[0]]);
  return out;
});

const StateLabel = styled.text`
  font: 700 20.5px Roboto, sans-serif;
  letter-spacing: 2px;
  text-anchor: middle;
  fill: #62676a;
  stroke: #fff;
  stroke-opacity: 0.85;
  stroke-width: 3.2px;
  paint-order: stroke;
  stroke-linejoin: round;
`;

function CountyMap() {
  return (
    <svg className="map" width="1518" height="816" viewBox="1442 706 1518 816">
      <defs>
        <clipPath id="land"><path d={area(usa)} /></clipPath>
      </defs>
      <path d={area(usa)} fill={tone[5]} />
      <g clipPath="url(#land)">
        <path d={mesh.join("")} fill="none" stroke="#9a2d50" strokeWidth="0.9" opacity="0.7" />
        {patches.map(([level, pts], i) => (
          <path key={i} d={area(pts)} fill={tone[level]} />
        ))}
        {cells.map(([level, d], i) => (
          <path key={i} d={d} fill={tone[level]} stroke="#a8456a" strokeOpacity="0.4" strokeWidth="0.7" />
        ))}
        <path
          d={[W("530,880 600,885 770,910"), W("525,920 650,930 770,945"), W("515,965 620,975 720,1000"), W("510,1010 690,1025"), W("600,885 590,970"), W("660,880 655,1000 640,1060"), W("720,870 715,1000"), W("570,1010 560,1060"), W("620,975 615,1010")].map(line).join("")}
          fill="none" stroke="#d78fb0" strokeWidth="0.9"
        />
      </g>
      <path d={[...alaska, ...hawaii, ...coastBits].map(area).join("")} fill={tone[5]} />
      <path d={area(S("622,425 650,418 668,435 677,492 655,498 640,502 625,490 608,495 612,475 620,470"))} fill={tone[1]} />
      <path d={area(S("957,485 968,473 985,493 970,500"))} fill={tone[4]} />
      <path d={[S("470,285 530,292 580,295 645,270"), S("497,380 530,370 555,325 548,295"), S("450,465 600,455 610,430 640,420"), S("500,455 498,400"), S("600,400 640,365 660,362"), S("505,520 500,490 530,490")].map(line).join("")} fill="none" stroke="#9a2d50" strokeWidth="0.8" opacity="0.6" />
      <path d={borders.map(line).join("")} fill="none" stroke="#fff" strokeWidth="1.8" strokeLinejoin="round" opacity="0.95" />
      <path d={area(T("1041,625 1050,622 1072,625 1112,628 1125,640 1118,660 1108,668 1092,670 1041,669 1038,640"))} fill="#eaeaea" />
      <path d={area(T("1126,654 1143,652 1142,657")) + area(T("1125,634 1130,633 1130,637")) + area(T("1134,640 1145,638 1142,642"))} fill="#eaeaea" />
      {labels.map(([name, [x, y]], i) => (
        <StateLabel key={i} x={x + 1} y={y + 7.5}>{name}</StateLabel>
      ))}
    </svg>
  );
}

/* ---------- data ---------- */
const grey = "#e8eaec";
const indicators = [
  { name: "Hotspots", value: "Hotspot", hit: 3, color: "#f9a45c", from: 2 },
  { name: "Total cases per 100K", value: "23.3K", hit: 4, color: "#f0bcd8" },
  { name: "New Cases per 100K", value: "87.8", hit: 4, color: "#b76287", active: true },
  { name: "Total Deaths per 100K", value: "274.2", hit: 3, color: "#fac8c9" },
  { name: "New Deaths per 100K", value: "0.72", hit: 1, color: "#fac8c9" },
  { name: "Vaccine Acceptance", value: "86%", hit: 2, color: "#b6d8e3" },
  { name: "Fully vaccinated per 100 people", value: "54.9", hit: 2, color: "#a4dcd7" },
];

function Indicator({ name, value, hit, color, from = 0, active }) {
  return (
    <IndicatorRow $active={active}>
      <Radio $active={active} />
      <div>
        <RowText><span>{name}</span><span>{value}</span></RowText>
        <Segments>
          {[0, 1, 2, 3, 4].map((i) => (
            <Segment key={i} $color={i < from ? "transparent" : i === hit ? color : active ? "#fff" : grey} />
          ))}
        </Segments>
      </div>
    </IndicatorRow>
  );
}

export default function App() {
  return (
    <Page>
      <Global />
      <Header>
        <Brand>
          <svg width="150" height="90" viewBox="0 0 150 90">
            {brandDots.map(([x, y, c], i) => <ellipse key={i} cx={x} cy={y} rx="2.1" ry="2" fill={c} />)}
            <text x="0" y="66" fontFamily="'Liberation Serif', serif" fontSize="41" textLength="80" lengthAdjust="spacingAndGlyphs" fill="#fff">surgo</text>
            <text x="7" y="81" fontFamily="Roboto, sans-serif" fontSize="8.5" textLength="66" fill="#dfe4e4">VENTURES</text>
          </svg>
        </Brand>
        <SiteTitle>Precision For COVID</SiteTitle>
      </Header>

      <Columns>
        <Sidebar>
          <SearchBox>
            <span>Search for address or place...</span>
            <MdSearch size={37} />
          </SearchBox>
          <Stage>
            <Accordion>
              <AccordionHeader $edge="top">Vulnerability<Plus /></AccordionHeader>
              <AccordionHeader $line>Race<Plus /></AccordionHeader>
              <AccordionHeader $line>Elevated Health Risk (EHR) Individuals<Plus /></AccordionHeader>
              <AccordionHeader $open>COVID-19 Stats</AccordionHeader>
              <Panel>
                <PanelHead>USA</PanelHead>
                {indicators.map((d) => <Indicator key={d.name} {...d} />)}
              </Panel>
              <AccordionHeader $line>Test Sites and Mobility<Plus /></AccordionHeader>
              <AccordionHeader $line $edge="bottom">Critical Risk Workers<Plus /></AccordionHeader>
            </Accordion>
          </Stage>
          <ShareRow>
            <ShareText>Share your findings:</ShareText>
            <ShareIcons>
              <BiLink size={32} />
              <FaTwitter size={33} />
              <FaFacebookF size={27} />
              <FaLinkedinIn size={29} />
            </ShareIcons>
          </ShareRow>
          <Contact>
            For more information, contact Surgo's COVID-19<br />team at <b>covid19@surgoventures.org</b>
          </Contact>
          <Credit>Designed &amp; Developed by Darkhorse Analytics</Credit>
        </Sidebar>

        <Content>
          <Heading>New Cases per 100K</Heading>
          <Intro>
            Tracking recent cases - the 7-day average of new daily cases per 100k - lets us see where the virus is particularly rampant. Identifying<br />
            communities with high recent case rates can help us direct resources and deploy policies such as shutdown orders or mask ordinances<br />
            in order to mitigate the spread.
          </Intro>
          <Controls>
            <Field>
              <Label>GRANULARITY</Label>
              <ButtonRow>
                <Button>States</Button>
                <Button $solid>Counties</Button>
                <Button $muted>Tracts</Button>
              </ButtonRow>
            </Field>
            <Divider />
            <Field>
              <Label>FOCUS ON</Label>
              <Select>All USA<Caret /></Select>
            </Field>
          </Controls>

          <Legend>
            <LegendTitle>New Cases per 100K</LegendTitle>
            <LegendBar>
              {[1, 2, 3, 4, 5].map((l) => <LegendSwatch key={l} $color={tone[l]} />)}
            </LegendBar>
            <LegendTicks>
              {["0", "20", "40", "60", "80", "≥100"].map((t) => <span key={t}>{t}</span>)}
            </LegendTicks>
          </Legend>

          <MapFrame>
            <CountyMap />
            <MapAttribution>
              <svg width="134" height="34" viewBox="0 0 134 34">
                <circle cx="17" cy="17" r="14.500" fill="none" stroke="#b4b4b4" strokeWidth="2.400" />
                <path d="M10 24c-1-9 1-15 8-15a7.500 7.500 0 0 1 7 8c-1 7-8 8-15 7z" fill="#b4b4b4" />
                <path d="M18.500 11l1.600 3.600 3.600 1.600-3.600 1.600-1.600 3.600-1.600-3.600-3.600-1.600 3.600-1.600z" fill="#fff" />
                <text x="36.500" y="24" fontFamily="Lato, sans-serif" fontWeight="700" fontSize="25" textLength="91" lengthAdjust="spacingAndGlyphs" fill="#fff" stroke="#b4b4b4" strokeWidth="4" paintOrder="stroke">mapbox</text>
              </svg>
            </MapAttribution>
            <MapButtons>
              <RoundButton>
                <svg width="22" height="22"><path d="M11 0v22M0 11h22" stroke="#5a5a5a" strokeWidth="3" /></svg>
              </RoundButton>
              <RoundButton>
                <svg width="22" height="22"><path d="M0 11h22" stroke="#5a5a5a" strokeWidth="3" /></svg>
              </RoundButton>
              <RoundButton>
                <svg width="30" height="20" viewBox="0 0 30 20">
                  <path d="M1.500 1l8 1 9.500 0.500 2 3 1 2 3-3 3.500-4 1 2-1 4-3 3-1 4-2 2 1 3-2-1-2-2-3 0.500-2 2-3-2-5-2-3-3-1.500-4z" fill="#555" />
                </svg>
              </RoundButton>
            </MapButtons>
          </MapFrame>

          <FilterRow>
            <FilterToggle>
              <svg width="26" height="26" viewBox="0 0 26 26">
                <path d="M8 3h15.500l-6 8.500v12l-5-4v-8z" fill="#b0b2b3" />
                <path d="M3 1l22 22" stroke="#fff" strokeWidth="2" />
                <path d="M2 2l22 23" stroke="#b0b2b3" strokeWidth="2" />
              </svg>
            </FilterToggle>
            <Field>
              <Label>ONLY SHOW REGIONS WITH</Label>
              <Select>Overall Vulnerability<Caret /></Select>
            </Field>
            <Slider>
              <SliderMarker>USA<i /></SliderMarker>
              <SliderEnds><span>0</span><span>1</span></SliderEnds>
              <SliderTrack>
                <TrackBars><i /><i /><i /><i /><i /></TrackBars>
                <Knob $col={1} />
                <Knob $col={3} />
              </SliderTrack>
              <SliderLabels>
                <span>VERY LOW</span><span>LOW</span><span>MODERATE</span><span>HIGH</span><span>VERY HIGH</span>
              </SliderLabels>
            </Slider>
          </FilterRow>
          <Heading $top={115}>Breakdown of New Cases per 100K by Vulnerability</Heading>
        </Content>
      </Columns>

      <Popover>
        <PopoverText>
          You can select an indicator of interest from the accordion on the left to<br />view its associated maps and charts.
        </PopoverText>
        <CheckLine><CheckBox />Don't show again</CheckLine>
        <PopoverButtons>
          <Button>Exit</Button>
          <Button $solid>Next</Button>
        </PopoverButtons>
      </Popover>
    </Page>
  );
}
